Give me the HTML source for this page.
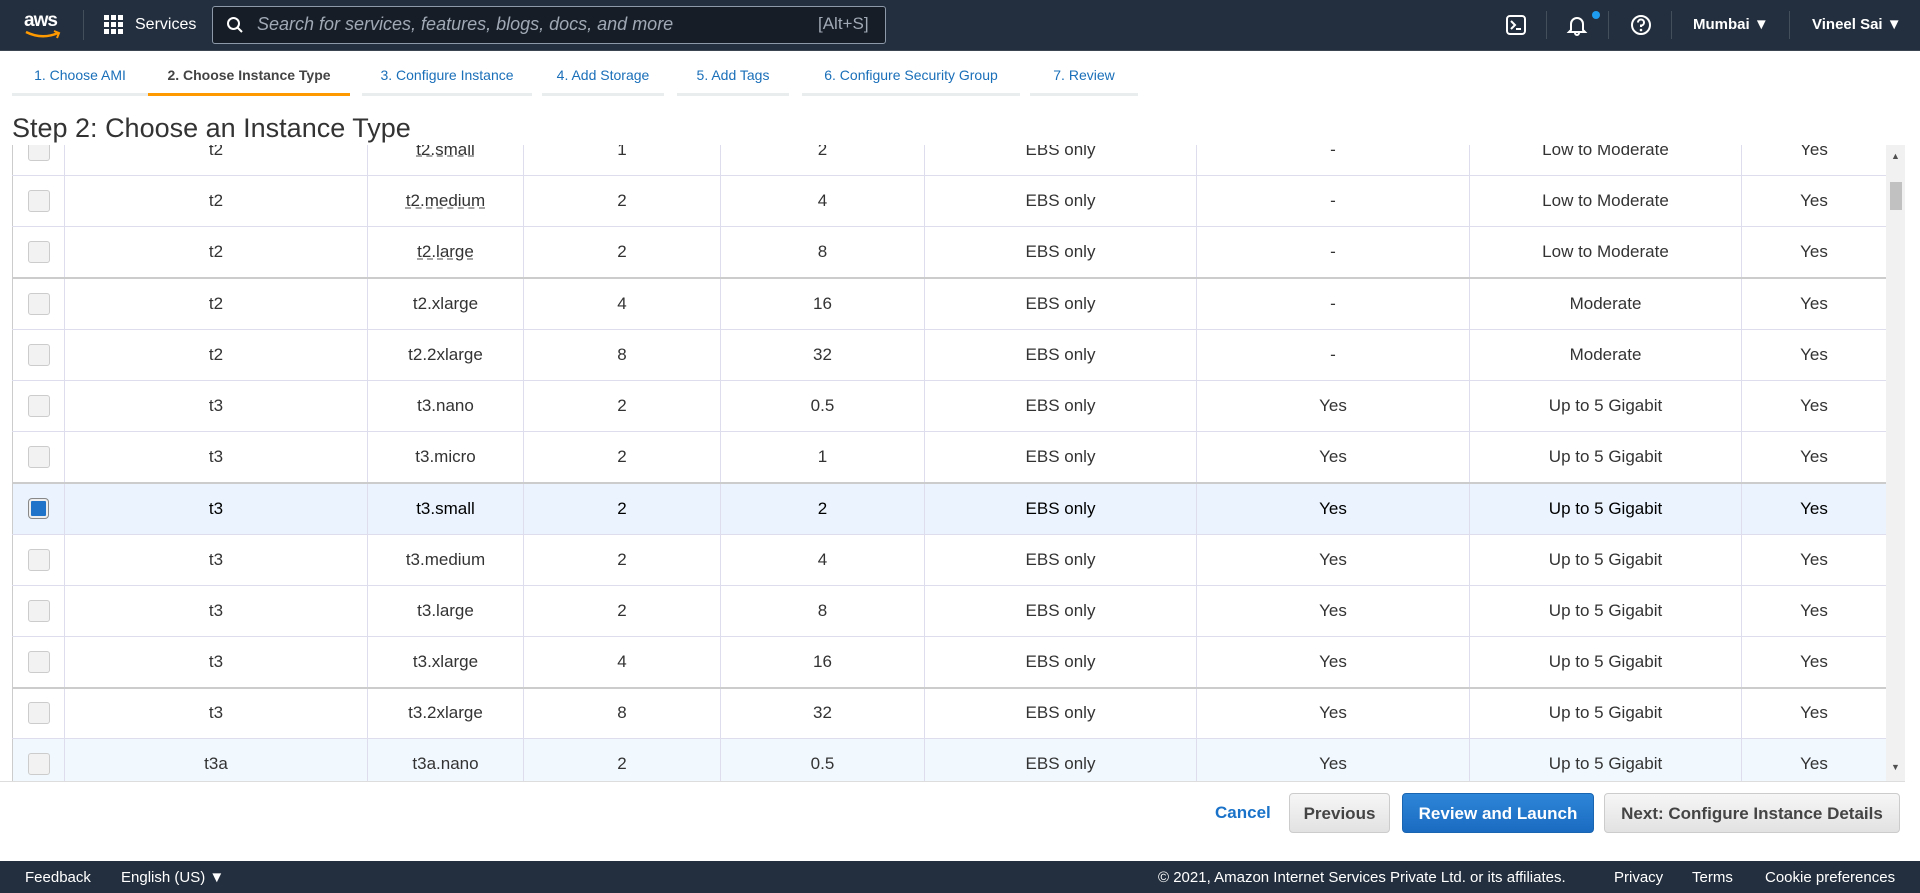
<html><head><style>
body{margin:0;width:1920px;height:893px;overflow:hidden;font-family:"Liberation Sans",sans-serif;background:#fff;position:relative}
.nav{position:absolute;left:0;top:0;width:1920px;height:50px;background:#232f3e;border-bottom:1px solid #3b4552;color:#fff}
.nav *{position:absolute}
.tabs div{position:absolute;top:67px;font-size:14px;color:#1a6fb9;height:26px;border-bottom:3px solid #eaeded;text-align:center}
h1{position:absolute;left:12px;top:113px;margin:0;font-weight:normal;font-size:27px;color:#333}
table{position:absolute;left:12px;top:124px;border-collapse:collapse;font-size:17px;color:#333;table-layout:fixed}
.wrap{position:absolute;left:0;top:145px;width:1905px;height:636px;overflow:hidden;border-bottom:1px solid #ddd}
tr{height:51.2px}
td{border:1px solid #dde;text-align:center;padding:0;border-left:1px solid #ccc}
.cb{display:inline-block;width:20px;height:20px;border:1px solid #ccc;border-radius:3px;background:#f2f2f2;vertical-align:middle}
.sel td{background:#eaf3fe}.hov td{background:#f1f8fe}
.u{text-decoration:underline dashed #999}
.btn{position:absolute;top:793px;height:40px;border-radius:4px;font-weight:bold;font-size:17px;line-height:40px;text-align:center;box-sizing:border-box}
.foot{position:absolute;left:0;top:861px;width:1920px;height:32px;background:#232f3e;color:#fff;font-size:15px}
.foot span{position:absolute;top:8px}
</style></head><body>
<div class="nav">
<div style="left:24px;top:10px;font-size:19px;font-weight:bold;letter-spacing:-1px">aws</div>
<svg style="left:24px;top:30px" width="38" height="10"><path d="M2 2 Q18 10 34 3" stroke="#f90" stroke-width="2.5" fill="none"/><path d="M30 1 L35 3 L33 8" stroke="#f90" stroke-width="2" fill="none"/></svg>
<div style="left:83px;top:10px;width:1px;height:30px;background:#444f5c"></div>
<svg style="left:104px;top:15px" width="20" height="20" fill="#fff"><rect x="0" y="0" width="5" height="5"/><rect x="7" y="0" width="5" height="5"/><rect x="14" y="0" width="5" height="5"/><rect x="0" y="7" width="5" height="5"/><rect x="7" y="7" width="5" height="5"/><rect x="14" y="7" width="5" height="5"/><rect x="0" y="14" width="5" height="5"/><rect x="7" y="14" width="5" height="5"/><rect x="14" y="14" width="5" height="5"/></svg>
<div style="left:135px;top:16px;font-size:16px">Services</div>
<div style="left:212px;top:6px;width:672px;height:36px;border:1px solid #8d99a8;border-radius:3px;background:#161d26"></div>
<svg style="left:226px;top:16px" width="18" height="18"><circle cx="7.5" cy="7.5" r="5.5" stroke="#fff" stroke-width="2" fill="none"/><path d="M11.5 11.5 L16 16" stroke="#fff" stroke-width="2"/></svg>
<div style="left:257px;top:14px;font-size:18px;font-style:italic;color:#a0a9b5">Search for services, features, blogs, docs, and more</div>
<div style="left:818px;top:14px;font-size:17px;color:#a0a9b5">[Alt+S]</div>
<svg style="left:1506px;top:15px" width="20" height="20"><rect x="1" y="1" width="18" height="18" rx="3" stroke="#fff" stroke-width="2" fill="none"/><path d="M5 6 L9 10 L5 14 M10 14 H15" stroke="#fff" stroke-width="2" fill="none"/></svg>
<div style="left:1546px;top:11px;width:1px;height:28px;background:#444f5c"></div>
<svg style="left:1566px;top:14px" width="22" height="22"><path d="M5 16 V10 A6 6 0 0 1 17 10 V16 L19 18 H3 Z M9 19 A2 2 0 0 0 13 19" stroke="#fff" stroke-width="2" fill="none"/></svg>
<div style="left:1592px;top:11px;width:8px;height:8px;border-radius:50%;background:#1e9cef"></div>
<div style="left:1608px;top:11px;width:1px;height:28px;background:#444f5c"></div>
<svg style="left:1630px;top:14px" width="22" height="22"><circle cx="11" cy="11" r="9" stroke="#fff" stroke-width="2" fill="none"/><path d="M8 8.5 A3 3 0 1 1 11 11.5 V13" stroke="#fff" stroke-width="2" fill="none"/><circle cx="11" cy="16" r="1.3" fill="#fff"/></svg>
<div style="left:1671px;top:11px;width:1px;height:28px;background:#444f5c"></div>
<div style="left:1693px;top:16px;font-size:15px;font-weight:bold">Mumbai ▼</div>
<div style="left:1789px;top:11px;width:1px;height:28px;background:#444f5c"></div>
<div style="left:1812px;top:16px;font-size:15px;font-weight:bold">Vineel Sai ▼</div>
</div>
<div class="tabs">
<div style="left:12px;width:136px">1. Choose AMI</div>
<div style="left:148px;width:202px;color:#444;font-weight:bold;border-color:#f90">2. Choose Instance Type</div>
<div style="left:362px;width:170px">3. Configure Instance</div>
<div style="left:542px;width:122px">4. Add Storage</div>
<div style="left:677px;width:112px">5. Add Tags</div>
<div style="left:802px;width:218px">6. Configure Security Group</div>
<div style="left:1030px;width:108px">7. Review</div>
</div>
<h1>Step 2: Choose an Instance Type</h1>
<div class="wrap">
<table style="top:-21px;left:12px;width:1874px">
<colgroup><col style="width:52px"><col style="width:303px"><col style="width:156px"><col style="width:197px"><col style="width:204px"><col style="width:272px"><col style="width:273px"><col style="width:272px"><col style="width:145px"></colgroup>
<tr><td><span class="cb"></span></td><td>t2</td><td><span class="u">t2.small</span></td><td>1</td><td>2</td><td>EBS only</td><td>-</td><td>Low to Moderate</td><td>Yes</td></tr>
<tr><td><span class="cb"></span></td><td>t2</td><td><span class="u">t2.medium</span></td><td>2</td><td>4</td><td>EBS only</td><td>-</td><td>Low to Moderate</td><td>Yes</td></tr>
<tr><td><span class="cb"></span></td><td>t2</td><td><span class="u">t2.large</span></td><td>2</td><td>8</td><td>EBS only</td><td>-</td><td>Low to Moderate</td><td>Yes</td></tr>
<tr style="border-top:2px solid #ccc"><td><span class="cb"></span></td><td>t2</td><td>t2.xlarge</td><td>4</td><td>16</td><td>EBS only</td><td>-</td><td>Moderate</td><td>Yes</td></tr>
<tr><td><span class="cb"></span></td><td>t2</td><td>t2.2xlarge</td><td>8</td><td>32</td><td>EBS only</td><td>-</td><td>Moderate</td><td>Yes</td></tr>
<tr><td><span class="cb"></span></td><td>t3</td><td>t3.nano</td><td>2</td><td>0.5</td><td>EBS only</td><td>Yes</td><td>Up to 5 Gigabit</td><td>Yes</td></tr>
<tr><td><span class="cb"></span></td><td>t3</td><td>t3.micro</td><td>2</td><td>1</td><td>EBS only</td><td>Yes</td><td>Up to 5 Gigabit</td><td>Yes</td></tr>
<tr class="sel" style="border-top:2px solid #ccc;color:#000"><td><span class="cb" style="background:#1f73c9;border:2px solid #eee;box-shadow:0 0 0 1px #888;width:15px;height:15px"></span></td><td>t3</td><td>t3.small</td><td>2</td><td>2</td><td>EBS only</td><td>Yes</td><td>Up to 5 Gigabit</td><td>Yes</td></tr>
<tr><td><span class="cb"></span></td><td>t3</td><td>t3.medium</td><td>2</td><td>4</td><td>EBS only</td><td>Yes</td><td>Up to 5 Gigabit</td><td>Yes</td></tr>
<tr><td><span class="cb"></span></td><td>t3</td><td>t3.large</td><td>2</td><td>8</td><td>EBS only</td><td>Yes</td><td>Up to 5 Gigabit</td><td>Yes</td></tr>
<tr><td><span class="cb"></span></td><td>t3</td><td>t3.xlarge</td><td>4</td><td>16</td><td>EBS only</td><td>Yes</td><td>Up to 5 Gigabit</td><td>Yes</td></tr>
<tr style="border-top:2px solid #ccc"><td><span class="cb"></span></td><td>t3</td><td>t3.2xlarge</td><td>8</td><td>32</td><td>EBS only</td><td>Yes</td><td>Up to 5 Gigabit</td><td>Yes</td></tr>
<tr class="hov"><td><span class="cb"></span></td><td>t3a</td><td>t3a.nano</td><td>2</td><td>0.5</td><td>EBS only</td><td>Yes</td><td>Up to 5 Gigabit</td><td>Yes</td></tr>
</table>
<div style="position:absolute;left:1886px;top:0;width:19px;height:636px;background:#f1f1f1"></div>
<div style="position:absolute;left:1890px;top:37px;width:12px;height:28px;background:#c1c1c1"></div>
<div style="position:absolute;left:1891px;top:6px;font-size:9px;color:#505050">▲</div>
<div style="position:absolute;left:1891px;top:617px;font-size:9px;color:#505050">▼</div>
</div>
<div style="position:absolute;left:1215px;top:803px;font-size:17px;font-weight:bold;color:#1a73c9">Cancel</div>
<div class="btn" style="left:1289px;width:101px;border:1px solid #ccc;background:linear-gradient(#f6f6f6,#e2e2e2);color:#444">Previous</div>
<div class="btn" style="left:1402px;width:192px;border:1px solid #1a65b2;background:linear-gradient(#2e86d8,#1a6bc1);color:#fff">Review and Launch</div>
<div class="btn" style="left:1604px;width:296px;border:1px solid #ccc;background:linear-gradient(#f6f6f6,#e2e2e2);color:#444">Next: Configure Instance Details</div>
<div class="foot">
<span style="left:25px">Feedback</span><span style="left:121px">English (US) ▼</span>
<span style="left:1158px">© 2021, Amazon Internet Services Private Ltd. or its affiliates.</span>
<span style="left:1614px">Privacy</span><span style="left:1692px">Terms</span><span style="left:1765px">Cookie preferences</span>
</div>
</body></html>
